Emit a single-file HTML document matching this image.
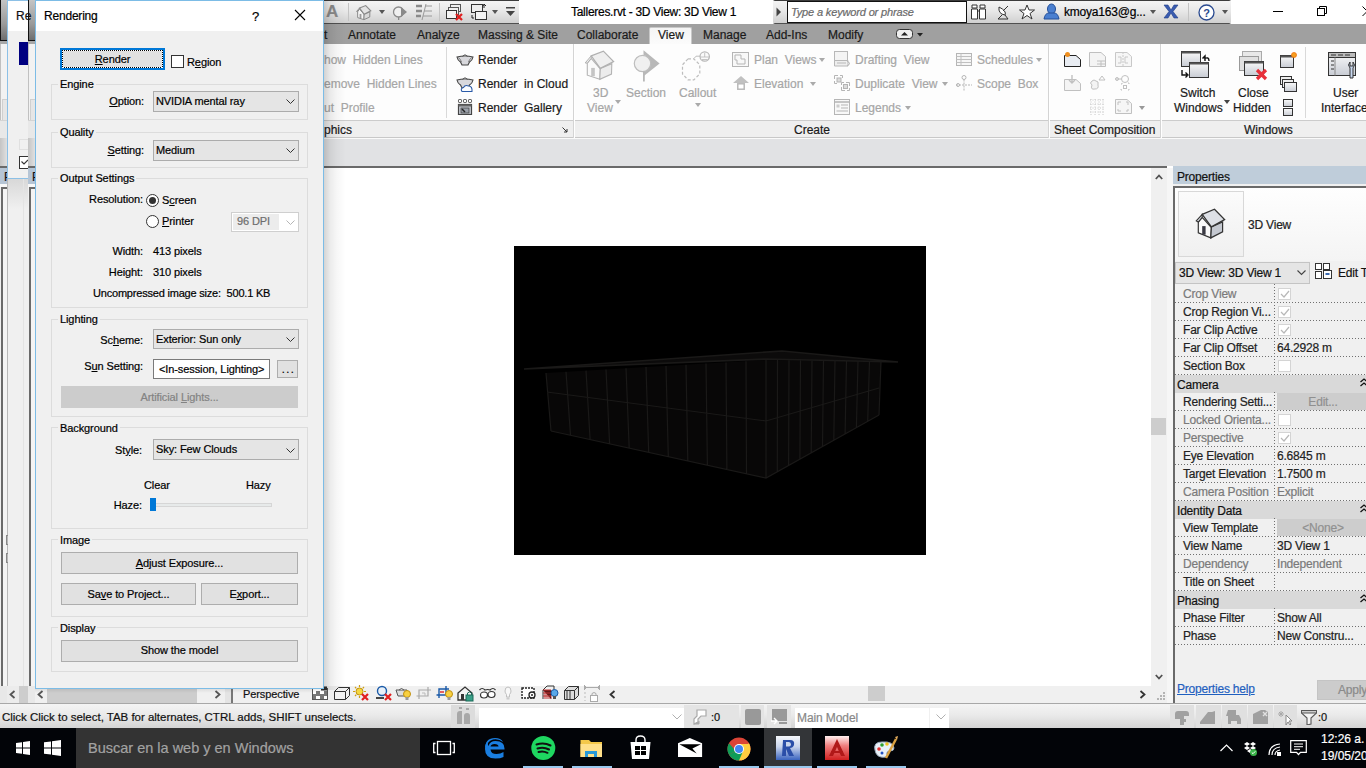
<!DOCTYPE html>
<html><head><meta charset="utf-8">
<style>
*{margin:0;padding:0;box-sizing:border-box}
html,body{width:1366px;height:768px;overflow:hidden;background:#fff;font-family:"Liberation Sans",sans-serif;font-size:12px;color:#000}
.a{position:absolute}
.t{position:absolute;white-space:nowrap;line-height:1}
.d{position:absolute;white-space:nowrap;line-height:1;font-size:11px;letter-spacing:-0.1px;color:#000}
.d.c{text-align:center}
.g{position:absolute;left:51px;width:257px;border:1px solid #dcdcdc}
.gl{left:58px;background:#f0f0f0;padding:0 2px}
.cb{position:absolute;left:153px;width:146px;background:#e5e5e5;border:1px solid #acacac}
.btn{background:#e1e1e1;border:1px solid #adadad}
u{text-decoration:underline;text-underline-offset:1px}
.qat{background:linear-gradient(#3c3c3c 0,#3c3c3c 1px,#f4f4f4 1px,#e8e8e8 11px,#d0d0d0 23px,#505050 23px,#505050 24px)}
.tab{top:29px;font-size:12px;color:#1a1a1a}
.rb{font-size:12px;color:#1a1a1a}
.dis{color:#a6a6a6}
.psep{top:44px;width:2px;height:94px;border-left:1px solid #d4d4d4;border-right:1px solid #fff}
.pr{font-size:12px;letter-spacing:-0.2px}
.dotl{background:repeating-linear-gradient(90deg,#707070 0,#707070 1px,transparent 1px,transparent 3px)}
.dotv{background:repeating-linear-gradient(180deg,#707070 0,#707070 1px,transparent 1px,transparent 3px)}
.d,.pr,.rb,.tab,.t{-webkit-text-stroke:0.2px currentColor}
</style></head><body>
<!-- ===== Revit title bar ===== -->
<div class="a" style="left:0;top:0;width:1366px;height:24px;background:#fff"></div>
<!-- QAT -->
<div class="a qat" style="left:0;top:0;width:519px;height:24px"></div>
<div class="t" style="left:326px;top:3px;font-size:17px;font-weight:bold;color:#8a8a8a">A</div>
<div class="a" style="left:348px;top:3px;width:1px;height:18px;background:#c4c4c4"></div>
<svg class="a" style="left:354px;top:3px" width="20" height="18"><g transform="scale(0.5)"><path d="M7.3 17.2L11.2 12.3L20.3 22.9L19.8 33.3L7.3 29.2Z" fill="#f4f4f4" stroke="#8a8a8a" stroke-width="2"/><path d="M20.3 22.4L31.8 17.7L31.5 28.1L19.8 33.3Z" fill="#d8d8d8" stroke="#8a8a8a" stroke-width="2"/><path d="M11.2 9.9L23.4 5.2L33.6 15.6L20.3 22.4Z" fill="#e4e4e4" stroke="#8a8a8a" stroke-width="2.2"/><path d="M5.2 16.9L11.2 9.9L11.2 12.3L7.3 17.2Z" fill="#e4e4e4" stroke="#8a8a8a" stroke-width="2"/><rect x="11.2" y="21.9" width="3.6" height="8.3" fill="#9a9a9a"/></g></svg>
<svg class="a" style="left:379px;top:10px" width="6" height="4"><path d="M0 0H6L3 4Z" fill="#555"/></svg>
<svg class="a" style="left:392px;top:4px" width="16" height="16"><circle cx="6.5" cy="8" r="5" fill="#f0f0f0" stroke="#8a8a8a" stroke-width="1.3"/><path d="M9 3L15 8L9 13Z" fill="#8a8a8a"/><rect x="6" y="13" width="1.3" height="3" fill="#8a8a8a"/></svg>
<svg class="a" style="left:416px;top:4px" width="17" height="16"><path d="M0 2H6M0 7H6M0 12H5" stroke="#8a8a8a" stroke-width="2.5"/><path d="M9 2H16M8 7H16M7 12H16M10 0L6 16" stroke="#9a9a9a" stroke-width="1"/></svg>
<div class="a" style="left:439px;top:3px;width:1px;height:18px;background:#c4c4c4"></div>
<svg class="a" style="left:446px;top:3px" width="18" height="18"><rect x="4.5" y="1.5" width="10" height="7" fill="#eee" stroke="#555"/><rect x="2.5" y="4.5" width="10" height="7" fill="#eee" stroke="#555"/><rect x="0.5" y="7.5" width="10" height="8" fill="#f4f4f4" stroke="#333"/><path d="M10 11L16 17M16 11L10 17" stroke="#e02020" stroke-width="2.2"/></svg>
<svg class="a" style="left:470px;top:3px" width="18" height="18"><rect x="1.5" y="1.5" width="11" height="8" fill="#eee" stroke="#333"/><rect x="5.5" y="8.5" width="11" height="8" fill="#f4f4f4" stroke="#333"/><path d="M14 5V2M13 3L14 1L16 3" stroke="#222" fill="none"/><path d="M2 12V15H4" stroke="#222" fill="none"/></svg>
<svg class="a" style="left:492px;top:10px" width="6" height="4"><path d="M0 0H6L3 4Z" fill="#555"/></svg>
<svg class="a" style="left:506px;top:7px" width="9" height="9"><rect x="0" y="0" width="9" height="1.5" fill="#444"/><path d="M0 4H9L4.5 9Z" fill="#444"/></svg>

<div class="t" style="left:571px;top:6px;font-size:12px;letter-spacing:-0.28px;color:#000">Talleres.rvt - 3D View: 3D View 1</div>
<svg class="a" style="left:776px;top:7px" width="6" height="10"><path d="M0 0L5 5L0 10Z" fill="#444"/></svg>
<!-- search toolbar -->
<div class="a qat" style="left:773px;top:0;width:458px;height:24px;border-radius:2px"></div>
<svg class="a" style="left:776px;top:7px" width="6" height="10"><path d="M0.5 0.5L5 5L0.5 9.5Z" fill="#444"/></svg>
<div class="a" style="left:787px;top:1px;width:180px;height:22px;background:#fff;border:1px solid #111"></div>
<div class="t" style="left:791px;top:7px;font-size:11px;letter-spacing:-0.15px;color:#6a6a6a;font-style:italic">Type a keyword or phrase</div>
<svg class="a" style="left:970px;top:4px" width="17" height="16"><path d="M2 1H7V4H2ZM10 1H15V4H10Z" fill="#fff" stroke="#333"/><path d="M1.5 5H7.5V15H1.5ZM9.5 5H15.5V15H9.5Z" fill="#fff" stroke="#333"/><path d="M7.5 7H9.5" stroke="#333"/></svg>
<svg class="a" style="left:996px;top:4px" width="14" height="16"><path d="M3 3Q2 10 9 11Q11 7 3 3Z" fill="#fff" stroke="#333"/><path d="M6 11L2 15H12L9 11" fill="none" stroke="#333"/><path d="M7 7L12 2" stroke="#333"/></svg>
<svg class="a" style="left:1019px;top:4px" width="16" height="16"><path d="M8 1L10 6H15.5L11 9.5L13 15L8 11.5L3 15L5 9.5L0.5 6H6Z" fill="#fff" stroke="#333"/></svg>
<svg class="a" style="left:1043px;top:3px" width="17" height="17"><ellipse cx="8.5" cy="6" rx="4" ry="5" fill="#4a7fd0" stroke="#24509a"/><path d="M1 16Q2 10 6 10H11Q15 10 16 16Z" fill="#4a7fd0" stroke="#24509a"/></svg>
<div class="t" style="left:1064px;top:6px;font-size:12px;letter-spacing:-0.2px;color:#000">kmoya163@g...</div>
<svg class="a" style="left:1150px;top:10px" width="6" height="4"><path d="M0 0H6L3 4Z" fill="#555"/></svg>
<svg class="a" style="left:1163px;top:4px" width="16" height="15"><path d="M1 1H5L8 6L11 1H15L10 7.5L15 14H11L8 9L5 14H1L6 7.5Z" fill="#3a5cb0" stroke="#1e3c88" stroke-width="0.6"/></svg>
<div class="a" style="left:1188px;top:3px;width:1px;height:18px;background:#c4c4c4"></div>
<svg class="a" style="left:1198px;top:4px" width="17" height="17"><circle cx="8.5" cy="8.5" r="7.5" fill="#fff" stroke="#2a4a90" stroke-width="1.3"/><text x="8.5" y="13" font-family="Liberation Sans" font-size="11" font-weight="bold" text-anchor="middle" fill="#2a4a90">?</text></svg>
<svg class="a" style="left:1222px;top:10px" width="6" height="4"><path d="M0 0H6L3 4Z" fill="#555"/></svg>
<!-- window controls -->
<div class="a" style="left:1273px;top:11px;width:10px;height:1px;background:#000"></div>
<svg class="a" style="left:1317px;top:6px" width="11" height="10"><rect x="0.5" y="2.5" width="7" height="7" fill="none" stroke="#000"/><path d="M2.5 2.5V0.5H9.5V7.5H7.5" fill="none" stroke="#000"/></svg>
<svg class="a" style="left:1362px;top:6px" width="4" height="11"><path d="M0.5 0.5L10 10M10 0.5L0.5 10" stroke="#000"/></svg>

<!-- ===== Tab bar ===== -->
<div class="a" style="left:0;top:24px;width:1366px;height:20px;background:#a0a0a0"></div>
<div class="a" style="left:649px;top:27px;width:43px;height:18px;background:linear-gradient(#f4f4f4,#fcfcfc);border:1px solid #c8c8c8;border-bottom:none;border-radius:2px 2px 0 0"></div>
<div class="t tab" style="left:324px">t</div>
<div class="t tab" style="left:348px">Annotate</div>
<div class="t tab" style="left:417px">Analyze</div>
<div class="t tab" style="left:478px">Massing &amp; Site</div>
<div class="t tab" style="left:577px">Collaborate</div>
<div class="t tab" style="left:658px">View</div>
<div class="t tab" style="left:703px">Manage</div>
<div class="t tab" style="left:766px">Add-Ins</div>
<div class="t tab" style="left:828px">Modify</div>
<svg class="a" style="left:896px;top:29px" width="28" height="11"><rect x="0.5" y="0.5" width="16" height="9" rx="3" fill="#eee" stroke="#333"/><path d="M5 6.5H12L8.5 3Z" fill="#222"/><path d="M21 4H27L24 7.5Z" fill="#222"/></svg>

<!-- ===== Ribbon ===== -->
<div class="a" style="left:0;top:44px;width:1366px;height:76px;background:#fdfdfd"></div>
<div class="a" style="left:0;top:120px;width:1366px;height:19px;background:#efefef;border-top:1px solid #cccccc;border-bottom:1px solid #fafafa;box-shadow:inset 0 -1px 0 #c8c8c8"></div>
<!-- panel separators -->
<div class="a psep" style="left:573px"></div>
<div class="a psep" style="left:1048px"></div>
<div class="a psep" style="left:1160px"></div>
<div class="a" style="left:446px;top:47px;width:1px;height:71px;background:#d9d9d9"></div>
<div class="a" style="left:1305px;top:47px;width:1px;height:71px;background:#d9d9d9"></div>
<!-- graphics panel -->
<div class="t rb dis" style="left:324px;top:54px">how&nbsp; Hidden Lines</div>
<div class="t rb dis" style="left:324px;top:78px">emove&nbsp; Hidden Lines</div>
<div class="t rb dis" style="left:324px;top:102px">ut&nbsp; Profile</div>
<svg class="a" style="left:456px;top:53px" width="18" height="13"><path d="M1 4Q9 2 17 4Q16.5 7 13.5 9L12 12H6L4.5 9Q1.5 7 1 4Z" fill="#d8d8dc" stroke="#444" stroke-width="1.1"/><path d="M2.5 4.5Q5 7 5.5 9M15.5 4.5Q13 7 12.5 9" fill="none" stroke="#666" stroke-width="0.8"/><path d="M6.5 3.3Q9 0.3 11.5 3.3" fill="#ccc" stroke="#444"/></svg>
<div class="t rb" style="left:478px;top:54px">Render</div>
<svg class="a" style="left:456px;top:76px" width="18" height="17"><path d="M1 4Q9 2 17 4Q16.5 7 13.5 9L12 12H6L4.5 9Q1.5 7 1 4Z" fill="#d8d8dc" stroke="#444" stroke-width="1.1"/><path d="M6.5 3.3Q9 0.3 11.5 3.3" fill="#ccc" stroke="#444"/><path d="M6 15.5Q4 12.5 7.5 11.5Q9 8.5 12.5 10Q16.5 10 16 15.5Z" fill="#fafcff" stroke="#2a5aa8" stroke-width="1.1"/></svg>
<div class="t rb" style="left:478px;top:78px">Render&nbsp; in Cloud</div>
<svg class="a" style="left:457px;top:99px" width="16" height="16"><rect x="1.5" y="0.5" width="3" height="3" rx="0.8" fill="none" stroke="#444"/><rect x="6.5" y="0.5" width="3" height="3" rx="0.8" fill="none" stroke="#444"/><rect x="11.5" y="0.5" width="3" height="3" rx="0.8" fill="none" stroke="#444"/><rect x="1.5" y="5.5" width="13" height="10" fill="#c8ccd4" stroke="#444" stroke-width="1.2"/><rect x="1.5" y="5.5" width="13" height="2" fill="#666"/><rect x="4" y="9" width="8" height="5" fill="#9aa0aa" stroke="#444" stroke-width="0.8"/><path d="M5 10L8 13" stroke="#222" stroke-width="1.5"/></svg>
<div class="t rb" style="left:478px;top:102px">Render&nbsp; Gallery</div>
<div class="t rb" style="left:324px;top:124px;color:#1a1a1a">phics</div>
<svg class="a" style="left:562px;top:127px" width="6" height="6"><path d="M0.5 0.5L5 5M5 2V5H2" fill="none" stroke="#333"/></svg>
<!-- create panel -->
<svg class="a" style="left:580px;top:46px" width="40" height="40"><path d="M7.3 17.2L11.2 12.3L20.3 22.9L19.8 33.3L7.3 29.2Z" fill="#fafafa" stroke="#b4b4b4" stroke-width="1.1"/><path d="M20.3 22.4L31.8 17.7L31.5 28.1L19.8 33.3Z" fill="#ececec" stroke="#b4b4b4" stroke-width="1.1"/><path d="M11.2 9.9L23.4 5.2L33.6 15.6L20.3 22.4Z" fill="#efefef" stroke="#b0b0b0" stroke-width="1.2"/><path d="M5.2 16.9L11.2 9.9L11.2 12.3L7.3 17.2Z" fill="#efefef" stroke="#b0b0b0" stroke-width="1"/><rect x="11.2" y="21.9" width="3.6" height="8.3" fill="#c4c4c4"/></svg>
<div class="t rb dis" style="left:593px;top:87px">3D</div>
<div class="t rb dis" style="left:587px;top:102px">View</div>
<svg class="a" style="left:615px;top:100px" width="6" height="4"><path d="M0 0H6L3 4Z" fill="#aaa"/></svg>
<svg class="a" style="left:628px;top:46px" width="36" height="38"><path d="M15.5 4.3L31.6 17.5L15.5 30.3Z" fill="#b8b8b8"/><circle cx="14.5" cy="17.5" r="8.2" fill="#f0f0f0" stroke="#bdbdbd" stroke-width="1.2"/><rect x="15" y="25.5" width="1.8" height="10" fill="#b8b8b8"/></svg>
<div class="t rb dis" style="left:626px;top:87px">Section</div>
<svg class="a" style="left:680px;top:50px" width="40" height="36"><path d="M6 8.8H11.8L17.8 14.8V23.9L11.8 29.9H6L0.5 23.9V14.8Z" transform="translate(2,0)" fill="none" stroke="#bdbdbd" stroke-width="1.2" stroke-dasharray="3,2"/><path d="M14 8.5L16 6.2H20" fill="none" stroke="#bdbdbd" stroke-width="1"/><circle cx="24.7" cy="6.5" r="4.7" fill="#fafafa" stroke="#b8b8b8" stroke-width="1.2"/><path d="M20 7H29.5M24.7 3V7M22 9.5H27.5" stroke="#b8b8b8" stroke-width="0.8"/></svg>
<div class="t rb dis" style="left:679px;top:87px">Callout</div>
<svg class="a" style="left:695px;top:103px" width="6" height="4"><path d="M0 0H6L3 4Z" fill="#aaa"/></svg>
<svg class="a" style="left:732px;top:52px" width="17" height="15"><rect x="0.5" y="0.5" width="16" height="14" fill="#f8f8f8" stroke="#b5b5b5"/><path d="M3 3H9V7H13V12H5V8H3Z" fill="none" stroke="#b5b5b5"/></svg>
<div class="t rb dis" style="left:754px;top:54px">Plan&nbsp; Views</div>
<svg class="a" style="left:819px;top:58px" width="6" height="4"><path d="M0 0H6L3 4Z" fill="#aaa"/></svg>
<svg class="a" style="left:733px;top:76px" width="16" height="14"><path d="M8 0L16 7H12V14H4V7H0Z" fill="#c0c0c0"/><rect x="5" y="8" width="6" height="5" fill="#fff" stroke="#b5b5b5"/></svg>
<div class="t rb dis" style="left:754px;top:78px">Elevation</div>
<svg class="a" style="left:810px;top:82px" width="6" height="4"><path d="M0 0H6L3 4Z" fill="#aaa"/></svg>
<svg class="a" style="left:834px;top:51px" width="17" height="16"><rect x="0.5" y="0.5" width="13" height="9" fill="#f4f4f4" stroke="#b8b8b8"/><path d="M0.5 9.5H14V15H0.5ZM3 12H12" fill="#eee" stroke="#b8b8b8"/><path d="M13 10L16 12.5L13 15" fill="none" stroke="#b8b8b8"/></svg>
<div class="t rb dis" style="left:855px;top:54px">Drafting&nbsp; View</div>
<svg class="a" style="left:834px;top:75px" width="16" height="16"><path d="M0.5 4V0.5H4M6 0.5H8.5V3M0.5 6V8.5H3" fill="none" stroke="#b5b5b5"/><path d="M7.5 12V15.5H11M13 15.5H15.5V13M15.5 11V7.5H12M10 7.5H7.5V10" fill="none" stroke="#b5b5b5"/><rect x="3" y="3" width="4" height="4" fill="#ddd" stroke="#b5b5b5"/><rect x="9.5" y="9.5" width="4" height="4" fill="#ddd" stroke="#b5b5b5"/></svg>
<div class="t rb dis" style="left:855px;top:78px">Duplicate&nbsp; View</div>
<svg class="a" style="left:942px;top:82px" width="6" height="4"><path d="M0 0H6L3 4Z" fill="#aaa"/></svg>
<svg class="a" style="left:834px;top:99px" width="16" height="16"><rect x="0.5" y="0.5" width="15" height="15" fill="#f8f8f8" stroke="#b5b5b5"/><path d="M0.5 3H15.5" stroke="#b5b5b5" stroke-width="1.5"/><rect x="2.5" y="5.5" width="3" height="3" fill="#ccc"/><path d="M7 6H14M7 9H14M2.5 12H14" stroke="#b5b5b5"/></svg>
<div class="t rb dis" style="left:855px;top:102px">Legends</div>
<svg class="a" style="left:905px;top:106px" width="6" height="4"><path d="M0 0H6L3 4Z" fill="#aaa"/></svg>
<svg class="a" style="left:956px;top:53px" width="16" height="13"><rect x="0.5" y="0.5" width="15" height="12" fill="#f6f6f6" stroke="#b5b5b5"/><path d="M0.5 3.5H15.5M0.5 6.5H15.5M0.5 9.5H15.5M5 0.5V12.5" stroke="#c0c0c0"/></svg>
<div class="t rb dis" style="left:977px;top:54px">Schedules</div>
<svg class="a" style="left:1036px;top:58px" width="6" height="4"><path d="M0 0H6L3 4Z" fill="#aaa"/></svg>
<svg class="a" style="left:956px;top:75px" width="16" height="16"><circle cx="8" cy="2.5" r="2" fill="none" stroke="#b5b5b5"/><path d="M8 4.5V16M0 10H16" stroke="#b5b5b5" stroke-dasharray="2,1"/><circle cx="2" cy="10" r="1.5" fill="none" stroke="#b5b5b5"/></svg>
<div class="t rb dis" style="left:977px;top:78px">Scope&nbsp; Box</div>
<div class="t rb" style="left:794px;top:124px;color:#1a1a1a">Create</div>
<!-- sheet composition -->
<svg class="a" style="left:1064px;top:51px" width="18" height="16"><path d="M0.5 4.5H12L16.5 8.5V15.5H0.5Z" fill="#e8ecf2" stroke="#222"/><circle cx="3.5" cy="3.5" r="2.5" fill="#f09020"/></svg>
<svg class="a" style="left:1089px;top:52px" width="17" height="15"><path d="M0.5 0.5H12L16.5 4.5V14.5H0.5Z" fill="#f4f4f4" stroke="#c0c0c0"/><path d="M8 9H16M8 12H16M12 9V14.5" stroke="#c0c0c0"/></svg>
<svg class="a" style="left:1115px;top:52px" width="17" height="15"><path d="M0.5 0.5H12L16.5 4.5V14.5H0.5Z" fill="#f6f6f6" stroke="#c8c8c8"/><path d="M8 0V15" stroke="#c8c8c8" stroke-dasharray="2,1"/><path d="M3 5H6V11H3M13 5H10V11H13" fill="none" stroke="#c8c8c8"/></svg>
<svg class="a" style="left:1064px;top:75px" width="17" height="16"><path d="M0.5 4.5H12L16.5 8.5V15.5H0.5Z" fill="#f4f4f4" stroke="#c0c0c0"/><path d="M8 0V7M5 5L8 8L11 5" fill="none" stroke="#c0c0c0" stroke-width="1.4"/></svg>
<svg class="a" style="left:1089px;top:75px" width="17" height="16"><path d="M3 10Q0 8 3 6Q5 4 7 6Q10 6 9 10Q10 14 6 14Q1 15 3 10Z" fill="#f4f4f4" stroke="#c0c0c0"/><path d="M10 5L13 1L16 5Z" fill="none" stroke="#c0c0c0"/></svg>
<svg class="a" style="left:1115px;top:75px" width="17" height="16"><circle cx="10" cy="4" r="3.5" fill="none" stroke="#c0c0c0"/><path d="M0.5 4H6.5" stroke="#c0c0c0"/><circle cx="2" cy="4" r="1.5" fill="none" stroke="#c0c0c0"/><path d="M6 9H7V8M13 8H14V9M14 14V15H13M7 15H6V14" fill="none" stroke="#c0c0c0"/><rect x="8.5" y="10.5" width="3" height="3" fill="none" stroke="#c0c0c0"/></svg>
<svg class="a" style="left:1089px;top:99px" width="17" height="16"><path d="M1 1H16M1 5H16M1 9H16M1 13H16M2 0V16M6 0V16M10 0V16M14 0V16" stroke="#c8c8c8" stroke-dasharray="1,1.5"/></svg>
<svg class="a" style="left:1115px;top:99px" width="17" height="15"><path d="M0.5 0.5H12L16.5 4.5V14.5H0.5Z" fill="#f6f6f6" stroke="#c0c0c0"/><path d="M3 6V3H6M11 3H13V6M13 10V12H11M6 12H3V10" fill="none" stroke="#c0c0c0"/></svg>
<svg class="a" style="left:1139px;top:106px" width="6" height="4"><path d="M0 0H6L3 4Z" fill="#999"/></svg>
<div class="t rb" style="left:1054px;top:124px;color:#1a1a1a">Sheet Composition</div>
<!-- windows panel -->
<svg class="a" style="left:1180px;top:50px" width="32" height="30"><rect x="1.5" y="1.5" width="19" height="15" fill="url(#wg)" stroke="#333"/><rect x="1.5" y="1.5" width="19" height="2" fill="#555"/><rect x="9.5" y="12.5" width="19" height="15" fill="url(#wg)" stroke="#333"/><rect x="9.5" y="12.5" width="19" height="2" fill="#555"/><path d="M24 9Q29 6 29 11M22.5 8.5L25 6V11" fill="none" stroke="#111" stroke-width="1.4"/><path d="M2 20V25H7M5.5 22.5L8 25L5.5 27.5" fill="none" stroke="#111" stroke-width="1.4"/></svg>
<div class="t rb" style="left:1180px;top:87px;color:#1a1a1a">Switch</div>
<div class="t rb" style="left:1174px;top:102px;color:#1a1a1a">Windows</div>
<svg class="a" style="left:1224px;top:100px" width="6" height="4"><path d="M0 0H6L3 4Z" fill="#444"/></svg>
<svg class="a" style="left:1238px;top:50px" width="32" height="31"><rect x="4.5" y="1.5" width="19" height="14" fill="#e8e8e8" stroke="#aaa"/><rect x="1.5" y="6.5" width="19" height="14" fill="#e0e0e0" stroke="#999"/><rect x="6.5" y="11.5" width="19" height="14" fill="url(#wg)" stroke="#333"/><rect x="6.5" y="11.5" width="19" height="2" fill="#555"/><path d="M19 20L28 29M28 20L19 29" stroke="#e8303a" stroke-width="3.2"/></svg>
<div class="t rb" style="left:1238px;top:87px;color:#1a1a1a">Close</div>
<div class="t rb" style="left:1233px;top:102px;color:#1a1a1a">Hidden</div>
<svg class="a" style="left:1280px;top:52px" width="17" height="16"><rect x="0.5" y="3.5" width="13" height="12" fill="url(#wg)" stroke="#333"/><rect x="0.5" y="3.5" width="13" height="2" fill="#555"/><circle cx="14" cy="3" r="2.5" fill="#f5a020" stroke="#f07010" stroke-width="0.8"/></svg>
<svg class="a" style="left:1280px;top:76px" width="17" height="16"><rect x="0.5" y="0.5" width="11" height="8" fill="#eee" stroke="#333"/><rect x="2.5" y="3.5" width="11" height="8" fill="#eee" stroke="#333"/><rect x="4.5" y="6.5" width="12" height="9" fill="url(#wg)" stroke="#333"/></svg>
<svg class="a" style="left:1283px;top:99px" width="10" height="17"><rect x="0.5" y="0.5" width="9" height="7" fill="url(#wg)" stroke="#333"/><rect x="0.5" y="9.5" width="9" height="7" fill="url(#wg)" stroke="#333"/></svg>
<svg class="a" style="left:1327px;top:51px" width="32" height="30"><rect x="1.5" y="1.5" width="27" height="23" fill="url(#wg)" stroke="#333"/><rect x="1.5" y="1.5" width="27" height="5" fill="#bbb" stroke="#333"/><path d="M4 4H9M11 4H16M18 4H23M4 10H7M4 14H7M4 18H7" stroke="#333"/><path d="M8 6.5V24.5" stroke="#888"/><path d="M23 17Q20 14 23 11V15H26V11Q29 14 26 17V27H23Z" fill="#c8d8f0" stroke="#333"/></svg>
<div class="t rb" style="left:1333px;top:87px;color:#1a1a1a">User</div>
<div class="t rb" style="left:1321px;top:102px;color:#1a1a1a">Interface</div>
<div class="t rb" style="left:1244px;top:124px;color:#1a1a1a">Windows</div>
<svg width="0" height="0" style="position:absolute"><defs><linearGradient id="wg" x1="0" y1="0" x2="0" y2="1"><stop offset="0" stop-color="#fafafa"/><stop offset="1" stop-color="#c8ccd4"/></linearGradient></defs></svg>

<!-- gray bar under ribbon -->
<div class="a" style="left:0;top:139px;width:1366px;height:27px;background:#e1e2e4"></div>
<div class="a" style="left:0;top:166px;width:1167px;height:2px;background:#6a6a6a"></div>

<!-- view area -->
<div class="a" style="left:0;top:168px;width:1151px;height:518px;background:#fff"></div>
<div class="a" style="left:1151px;top:168px;width:16px;height:518px;background:#f0f0f0"></div>
<svg class="a" style="left:1155px;top:174px" width="8" height="6"><path d="M0.8 5L4 1.5L7.2 5" fill="none" stroke="#505050" stroke-width="1.8"/></svg>
<svg class="a" style="left:1155px;top:674px" width="8" height="6"><path d="M0.8 1L4 4.5L7.2 1" fill="none" stroke="#505050" stroke-width="1.8"/></svg>
<div class="a" style="left:1151px;top:418px;width:15px;height:17px;background:#cdcdcd"></div>
<!-- render image -->
<div class="a" style="left:514px;top:246px;width:412px;height:309px;background:#000"></div>
<svg class="a" style="left:514px;top:246px" width="412" height="309">
<path d="M32 127 L252 114 L252 232 L37 185 Z" fill="#080707"/>
<path d="M252 114 L367 115 L365 169 L252 232 Z" fill="#090808"/>
<path d="M10 123 L268 105 L384 116 L252 113 Z" fill="#0c0b0b" stroke="#1a1918" stroke-width="1.6"/>
<path d="M32.0 127.0L37.0 185.0 M52.0 125.8L56.5 189.3 M72.0 124.6L76.1 193.5 M92.0 123.5L95.6 197.8 M112.0 122.3L115.2 202.1 M132.0 121.1L134.7 206.4 M152.0 119.9L154.3 210.6 M172.0 118.7L173.8 214.9 M192.0 117.5L193.4 219.2 M212.0 116.4L212.9 223.5 M232.0 115.2L232.5 227.7 M252.0 114.0L252.0 232.0 M263.5 114.1L263.3 225.7 M275.0 114.2L274.6 219.4 M286.5 114.3L285.9 213.1 M298.0 114.4L297.2 206.8 M309.5 114.5L308.5 200.5 M321.0 114.6L319.8 194.2 M332.5 114.7L331.1 187.9 M344.0 114.8L342.4 181.6 M355.5 114.9L353.7 175.3 M367.0 115.0L365.0 169.0 M37 185L252 232L365 169 M33 146L252 175L365 142" fill="none" stroke="#1a1918" stroke-width="1.2"/>
</svg>

<!-- right gap -->
<div class="a" style="left:1167px;top:168px;width:6px;height:535px;background:#f6f6f6"></div>
<!-- properties -->
<div class="a" style="left:1173px;top:166px;width:193px;height:538px;background:#f0f0f0"></div>
<div class="a" style="left:1173px;top:166px;width:193px;height:18px;background:#bfcdda"></div>
<div class="t pr" style="left:1177px;top:171px;color:#111">Properties</div>
<div class="a" style="left:1173px;top:186px;width:193px;height:2px;background:#6a6a6a"></div>
<div class="a" style="left:1173px;top:186px;width:2px;height:517px;background:#6a6a6a"></div>
<div class="a" style="left:1175px;top:188px;width:191px;height:73px;background:linear-gradient(#fefefe,#f4f4f4)"></div>
<div class="a" style="left:1178px;top:191px;width:66px;height:66px;background:linear-gradient(#fbfbfb,#f0f0f0);border:1px solid #d8d8d8"></div>
<svg class="a" style="left:1190px;top:204px" width="40" height="40"><path d="M8.3 18L12.2 13.3L21.4 23.5L20.8 33.9L8.3 28.9Z" fill="#fafafa" stroke="#333" stroke-width="1.2"/><path d="M21.4 22.9L32.6 18L32.6 27.9L20.8 33.9Z" fill="#c4c8d0" stroke="#333" stroke-width="1.2"/><path d="M12.2 10.4L24.5 5.2L34.6 15.6L21.4 22.9Z" fill="#dde0e6" stroke="#333" stroke-width="1.3"/><path d="M6.25 16.9L12.2 10.4L12.2 13.3L8.3 18Z" fill="#dde0e6" stroke="#333" stroke-width="1.1"/><rect x="12.2" y="22.1" width="3.4" height="8.6" fill="#3a3a44"/></svg>
<div class="t pr" style="left:1248px;top:219px;color:#222">3D View</div>
<div class="a" style="left:1175px;top:262px;width:135px;height:22px;background:#e5e5e5;border:1px solid #c4c4c4"></div>
<div class="t pr" style="left:1179px;top:267px;color:#111">3D View: 3D View 1</div>
<svg class="a" style="left:1297px;top:270px" width="9" height="6"><path d="M0.5 0.5L4.5 4.5L8.5 0.5" fill="none" stroke="#444" stroke-width="1.1"/></svg>
<svg class="a" style="left:1315px;top:263px" width="17" height="16"><rect x="0.5" y="0.5" width="6" height="6" fill="#fff" stroke="#333"/><rect x="0.5" y="8.5" width="6" height="7" fill="#fff" stroke="#333"/><rect x="8.5" y="0.5" width="6" height="6" fill="#fff" stroke="#333"/><rect x="8.5" y="7.5" width="8" height="8" fill="#fff" stroke="#333"/><rect x="10.5" y="10" width="4" height="2" fill="#3a6ab0"/></svg>
<div class="t pr" style="left:1338px;top:267px;color:#111">Edit Type</div>
<!-- property rows -->
<div class="t pr" style="left:1183px;top:288px;color:#7a7a7a">Crop View</div>
<div class="a" style="left:1278px;top:288px;width:13px;height:12px;background:#fff;border:1px solid #d4d4d4"></div>
<svg class="a" style="left:1280px;top:290px" width="10" height="8"><path d="M1 4L4 7L9 1" fill="none" stroke="#b8b8b8" stroke-width="1.2"/></svg>
<div class="a dotl" style="left:1175px;top:302px;width:191px;height:1px"></div>
<div class="a dotv" style="left:1274px;top:284px;width:1px;height:18px"></div>
<div class="t pr" style="left:1183px;top:306px;color:#222">Crop Region Vi...</div>
<div class="a" style="left:1278px;top:306px;width:13px;height:12px;background:#fff;border:1px solid #d4d4d4"></div>
<svg class="a" style="left:1280px;top:308px" width="10" height="8"><path d="M1 4L4 7L9 1" fill="none" stroke="#b8b8b8" stroke-width="1.2"/></svg>
<div class="a dotl" style="left:1175px;top:320px;width:191px;height:1px"></div>
<div class="a dotv" style="left:1274px;top:302px;width:1px;height:18px"></div>
<div class="t pr" style="left:1183px;top:324px;color:#222">Far Clip Active</div>
<div class="a" style="left:1278px;top:324px;width:13px;height:12px;background:#fff;border:1px solid #d4d4d4"></div>
<svg class="a" style="left:1280px;top:326px" width="10" height="8"><path d="M1 4L4 7L9 1" fill="none" stroke="#b8b8b8" stroke-width="1.2"/></svg>
<div class="a dotl" style="left:1175px;top:338px;width:191px;height:1px"></div>
<div class="a dotv" style="left:1274px;top:320px;width:1px;height:18px"></div>
<div class="t pr" style="left:1183px;top:342px;color:#222">Far Clip Offset</div>
<div class="t pr" style="left:1277px;top:342px;color:#222">64.2928 m</div>
<div class="a dotl" style="left:1175px;top:356px;width:191px;height:1px"></div>
<div class="a dotv" style="left:1274px;top:338px;width:1px;height:18px"></div>
<div class="t pr" style="left:1183px;top:360px;color:#222">Section Box</div>
<div class="a" style="left:1278px;top:360px;width:13px;height:12px;background:#fff;border:1px solid #d4d4d4"></div>
<div class="a dotl" style="left:1175px;top:374px;width:191px;height:1px"></div>
<div class="a dotv" style="left:1274px;top:356px;width:1px;height:18px"></div>
<div class="a" style="left:1175px;top:375px;width:191px;height:18px;background:#d9d9d9"></div>
<div class="t pr" style="left:1177px;top:379px;color:#111">Camera</div>
<svg class="a" style="left:1360px;top:378px" width="8" height="9"><path d="M0.5 4L4 1L7.5 4M0.5 8L4 5L7.5 8" fill="none" stroke="#111" stroke-width="1.3"/></svg>
<div class="t pr" style="left:1183px;top:396px;color:#222">Rendering Setti...</div>
<div class="a" style="left:1277px;top:393px;width:89px;height:17px;background:#cdcdcd"></div>
<div class="t pr" style="left:1277px;width:92px;text-align:center;top:396px;color:#909090">Edit...</div>
<div class="a dotl" style="left:1175px;top:410px;width:191px;height:1px"></div>
<div class="a dotv" style="left:1274px;top:392px;width:1px;height:18px"></div>
<div class="t pr" style="left:1183px;top:414px;color:#7a7a7a">Locked Orienta...</div>
<div class="a" style="left:1278px;top:414px;width:13px;height:12px;background:#fff;border:1px solid #d4d4d4"></div>
<div class="a dotl" style="left:1175px;top:428px;width:191px;height:1px"></div>
<div class="a dotv" style="left:1274px;top:410px;width:1px;height:18px"></div>
<div class="t pr" style="left:1183px;top:432px;color:#7a7a7a">Perspective</div>
<div class="a" style="left:1278px;top:432px;width:13px;height:12px;background:#fff;border:1px solid #d4d4d4"></div>
<svg class="a" style="left:1280px;top:434px" width="10" height="8"><path d="M1 4L4 7L9 1" fill="none" stroke="#b8b8b8" stroke-width="1.2"/></svg>
<div class="a dotl" style="left:1175px;top:446px;width:191px;height:1px"></div>
<div class="a dotv" style="left:1274px;top:428px;width:1px;height:18px"></div>
<div class="t pr" style="left:1183px;top:450px;color:#222">Eye Elevation</div>
<div class="t pr" style="left:1277px;top:450px;color:#222">6.6845 m</div>
<div class="a dotl" style="left:1175px;top:464px;width:191px;height:1px"></div>
<div class="a dotv" style="left:1274px;top:446px;width:1px;height:18px"></div>
<div class="t pr" style="left:1183px;top:468px;color:#222">Target Elevation</div>
<div class="t pr" style="left:1277px;top:468px;color:#222">1.7500 m</div>
<div class="a dotl" style="left:1175px;top:482px;width:191px;height:1px"></div>
<div class="a dotv" style="left:1274px;top:464px;width:1px;height:18px"></div>
<div class="t pr" style="left:1183px;top:486px;color:#7a7a7a">Camera Position</div>
<div class="t pr" style="left:1277px;top:486px;color:#7a7a7a">Explicit</div>
<div class="a dotl" style="left:1175px;top:500px;width:191px;height:1px"></div>
<div class="a dotv" style="left:1274px;top:482px;width:1px;height:18px"></div>
<div class="a" style="left:1175px;top:501px;width:191px;height:18px;background:#d9d9d9"></div>
<div class="t pr" style="left:1177px;top:505px;color:#111">Identity Data</div>
<svg class="a" style="left:1360px;top:504px" width="8" height="9"><path d="M0.5 4L4 1L7.5 4M0.5 8L4 5L7.5 8" fill="none" stroke="#111" stroke-width="1.3"/></svg>
<div class="t pr" style="left:1183px;top:522px;color:#222">View Template</div>
<div class="a" style="left:1277px;top:519px;width:89px;height:17px;background:#cdcdcd"></div>
<div class="t pr" style="left:1277px;width:92px;text-align:center;top:522px;color:#909090">&lt;None&gt;</div>
<div class="a dotl" style="left:1175px;top:536px;width:191px;height:1px"></div>
<div class="a dotv" style="left:1274px;top:518px;width:1px;height:18px"></div>
<div class="t pr" style="left:1183px;top:540px;color:#222">View Name</div>
<div class="t pr" style="left:1277px;top:540px;color:#222">3D View 1</div>
<div class="a dotl" style="left:1175px;top:554px;width:191px;height:1px"></div>
<div class="a dotv" style="left:1274px;top:536px;width:1px;height:18px"></div>
<div class="t pr" style="left:1183px;top:558px;color:#7a7a7a">Dependency</div>
<div class="t pr" style="left:1277px;top:558px;color:#7a7a7a">Independent</div>
<div class="a dotl" style="left:1175px;top:572px;width:191px;height:1px"></div>
<div class="a dotv" style="left:1274px;top:554px;width:1px;height:18px"></div>
<div class="t pr" style="left:1183px;top:576px;color:#222">Title on Sheet</div>
<div class="a dotl" style="left:1175px;top:590px;width:191px;height:1px"></div>
<div class="a dotv" style="left:1274px;top:572px;width:1px;height:18px"></div>
<div class="a" style="left:1175px;top:591px;width:191px;height:18px;background:#d9d9d9"></div>
<div class="t pr" style="left:1177px;top:595px;color:#111">Phasing</div>
<svg class="a" style="left:1360px;top:594px" width="8" height="9"><path d="M0.5 4L4 1L7.5 4M0.5 8L4 5L7.5 8" fill="none" stroke="#111" stroke-width="1.3"/></svg>
<div class="t pr" style="left:1183px;top:612px;color:#222">Phase Filter</div>
<div class="t pr" style="left:1277px;top:612px;color:#222">Show All</div>
<div class="a dotl" style="left:1175px;top:626px;width:191px;height:1px"></div>
<div class="a dotv" style="left:1274px;top:608px;width:1px;height:18px"></div>
<div class="t pr" style="left:1183px;top:630px;color:#222">Phase</div>
<div class="t pr" style="left:1277px;top:630px;color:#222">New Constru...</div>
<div class="a dotl" style="left:1175px;top:644px;width:191px;height:1px"></div>
<div class="a dotv" style="left:1274px;top:626px;width:1px;height:18px"></div>
<div class="t pr" style="left:1177px;top:683px;color:#1f5fbf;text-decoration:underline">Properties help</div>
<div class="a" style="left:1317px;top:680px;width:60px;height:20px;background:#cccccc;border:1px solid #c4c4c4"></div>
<div class="t pr" style="left:1338px;top:684px;color:#8a8a8a">Apply</div>

<!-- view control bar -->
<div class="a" style="left:0;top:686px;width:1151px;height:18px;background:#f0f0f0"></div>
<div class="a" style="left:47px;top:689px;width:150px;height:15px;background:#cdcdcd"></div>
<svg class="a" style="left:9px;top:690px" width="7" height="9"><path d="M5.5 1L1.5 4.5L5.5 8" fill="none" stroke="#555" stroke-width="1.8"/></svg>
<svg class="a" style="left:37px;top:690px" width="7" height="9"><path d="M5.5 1L1.5 4.5L5.5 8" fill="none" stroke="#555" stroke-width="1.8"/></svg>
<svg class="a" style="left:214px;top:690px" width="7" height="9"><path d="M1.5 1L5.5 4.5L1.5 8" fill="none" stroke="#555" stroke-width="1.8"/></svg>
<div class="a" style="left:225px;top:686px;width:7px;height:18px;background:#e4e4e4"></div>
<div class="a" style="left:231px;top:689px;width:2px;height:14px;background:#777"></div>
<div class="t" style="left:243px;top:689px;font-size:11px;letter-spacing:-0.1px;color:#111">Perspective</div>
<svg class="a" style="left:312px;top:686px" width="16" height="14"><rect x="0.5" y="2.5" width="15" height="11" fill="#fff" stroke="#555"/><path d="M1 8H4V5H8V8H12V5H15V10H12V13H8V10H4V13H1Z" fill="#777"/><rect x="9" y="0.5" width="6" height="4" fill="#333"/></svg>
<svg class="a" style="left:334px;top:686px" width="16" height="14"><path d="M0.5 5.5L4.5 1.5H15.5V9.5L11.5 13.5H0.5Z" fill="#f4f4f4" stroke="#333"/><path d="M0.5 5.5H11.5V13.5M11.5 5.5L15.5 1.5" fill="none" stroke="#333"/></svg>
<svg class="a" style="left:353px;top:685px" width="16" height="16"><circle cx="6.5" cy="6.5" r="3.5" fill="#f5d840" stroke="#c09010"/><path d="M6.5 0V2M6.5 11V13M0 6.5H2M11 6.5H13M2 2L3.3 3.3M11 2L9.7 3.3M2 11L3.3 9.7" stroke="#d0a010" stroke-width="1.2"/><path d="M9 9L15 15M15 9L9 15" stroke="#e02020" stroke-width="2.2"/></svg>
<svg class="a" style="left:376px;top:685px" width="16" height="16"><circle cx="6" cy="6" r="4.5" fill="#e8f0f8" stroke="#1a5aa8" stroke-width="1.4"/><path d="M0 13H8" stroke="#444" stroke-width="2"/><path d="M9 9L15 15M15 9L9 15" stroke="#e02020" stroke-width="2.2"/></svg>
<svg class="a" style="left:395px;top:685px" width="16" height="16"><path d="M1 5H12L10 11H3Z" fill="#ddd" stroke="#555"/><path d="M4 5Q6.5 2 9 5" fill="#ccc" stroke="#555"/><circle cx="12" cy="9" r="3.5" fill="#f8d040" stroke="#c09010"/><rect x="10.5" y="12" width="3" height="3" fill="#999"/></svg>
<svg class="a" style="left:416px;top:686px" width="16" height="14"><path d="M3 13V4H15M0.5 10H12V1" fill="none" stroke="#aaa" stroke-width="1.2"/><path d="M6 7H9V10" fill="none" stroke="#bbb"/></svg>
<svg class="a" style="left:436px;top:685px" width="17" height="16"><path d="M3 13V4H13M0.5 10H10V1" fill="none" stroke="#1a5aa8" stroke-width="1.4"/><path d="M4 7H8" stroke="#e03030" stroke-width="1.5"/><circle cx="13" cy="9" r="3.5" fill="#f8d040" stroke="#c09010"/><rect x="11.5" y="12" width="3" height="3" fill="#999"/></svg>
<svg class="a" style="left:457px;top:685px" width="17" height="17"><path d="M1 8L8 2L15 8V15H1Z" fill="#f4f4f4" stroke="#333" stroke-width="1.3"/><rect x="4" y="9" width="3" height="6" fill="#333"/><rect x="9" y="10" width="7" height="6" fill="#3aa088" stroke="#1a6a58"/><path d="M10.5 10V8Q12.5 6 14.5 8V10" fill="none" stroke="#1a6a58"/></svg>
<svg class="a" style="left:479px;top:686px" width="17" height="14"><path d="M0.5 4Q3 1 6 4Q9 3 11 4Q14 1 16.5 4" fill="none" stroke="#333" stroke-width="1.2"/><ellipse cx="5" cy="9" rx="3.5" ry="3" fill="#fff" stroke="#333" stroke-width="1.2"/><ellipse cx="12.5" cy="8.5" rx="3.5" ry="3" fill="#fff" stroke="#333" stroke-width="1.2"/></svg>
<svg class="a" style="left:504px;top:686px" width="8" height="14"><path d="M4 1Q7 1 7 5Q7 7 5.5 8.5V11H2.5V8.5Q1 7 1 5Q1 1 4 1Z" fill="#f8f8f8" stroke="#c0c0c0"/><rect x="2.5" y="11.5" width="3" height="2" fill="#ccc"/></svg>
<svg class="a" style="left:521px;top:686px" width="16" height="14"><rect x="1" y="2" width="12" height="10" fill="#fff" stroke="#222" stroke-width="1.4" stroke-dasharray="2,1"/><circle cx="11" cy="9" r="3" fill="#fff" stroke="#222" stroke-width="1.3"/><circle cx="11" cy="9" r="1" fill="#222"/></svg>
<svg class="a" style="left:542px;top:685px" width="17" height="16"><path d="M1 14V5L5 1H12V10" fill="none" stroke="#333"/><path d="M1 5H9V14M3 5V14M5 5V14M7 5V14M1 8H9M1 11H9" stroke="#c03030" stroke-width="1"/><circle cx="12.5" cy="8" r="3.5" fill="#5aa8e8" stroke="#1a5aa8"/><rect x="11" y="11" width="3" height="3" fill="#555"/></svg>
<svg class="a" style="left:564px;top:686px" width="15" height="14"><path d="M0.5 4.5L4.5 0.5H14.5V9.5L10.5 13.5H0.5Z" fill="#ddd" stroke="#333"/><path d="M0.5 4.5H10.5V13.5M10.5 4.5L14.5 0.5M3 4.5V13.5M6 4.5V13.5" fill="none" stroke="#333"/></svg>
<svg class="a" style="left:584px;top:685px" width="16" height="17"><path d="M0.5 0V5M15.5 0V5M0.5 2.5H15.5M2 1L0.5 2.5L2 4M14 1L15.5 2.5L14 4" fill="none" stroke="#aaa"/><path d="M1 7V16" stroke="#bbb" stroke-dasharray="2,2"/><rect x="6.5" y="10.5" width="7" height="6" fill="#fff" stroke="#aaa"/><path d="M8 10.5V8.5Q10 6.5 12 8.5V10.5" fill="none" stroke="#aaa"/></svg>

<div class="a" style="left:603px;top:686px;width:564px;height:18px;background:#f0f0f0"></div>
<svg class="a" style="left:609px;top:690px" width="7" height="9"><path d="M5.5 1L1.5 4.5L5.5 8" fill="none" stroke="#333" stroke-width="1.8"/></svg>
<div class="a" style="left:868px;top:686px;width:17px;height:15px;background:#cdcdcd"></div>
<svg class="a" style="left:1139px;top:690px" width="7" height="9"><path d="M1.5 1L5.5 4.5L1.5 8" fill="none" stroke="#333" stroke-width="1.8"/></svg>
<svg class="a" style="left:1156px;top:692px" width="10" height="10"><path d="M7 0h2v2h-2zM4 3h2v2h-2zM7 3h2v2h-2zM1 6h2v2h-2zM4 6h2v2h-2zM7 6h2v2h-2z" fill="#b4b4b4"/></svg>

<!-- status bar -->
<div class="a" style="left:0;top:703px;width:1366px;height:25px;background:linear-gradient(#a8a8a8 0,#a8a8a8 1px,#f4f4f4 1px,#eaeaea 12px,#d4d4d4 25px)"></div>
<div class="t" style="left:2px;top:712px;font-size:11.5px;letter-spacing:-0.02px;color:#111">Click Click to select, TAB for alternates, CTRL adds, SHIFT unselects.</div>
<div class="a" style="left:451px;top:705px;width:24px;height:23px;background:#dcdcdc"></div>
<svg class="a" style="left:454px;top:707px" width="18" height="18"><path d="M3 17V7Q3 4 6 4H8V17ZM10 17V9Q10 6 13 6Q16 6 16 9V17Z" fill="#a8a8a8"/><path d="M5 1H8M12 2H15" stroke="#a8a8a8" stroke-width="2"/></svg>
<div class="a" style="left:479px;top:708px;width:205px;height:20px;background:#fff"></div>
<svg class="a" style="left:672px;top:714px" width="10" height="6"><path d="M0.5 0.5L5 5L9.5 0.5" fill="none" stroke="#b0b0b0"/></svg>
<div class="a" style="left:684px;top:705px;width:55px;height:23px;background:#e4e4e4"></div>
<svg class="a" style="left:691px;top:708px" width="16" height="17"><path d="M6 2H15V8H10L7 11V14L3 16V11L6 8Z" fill="#fff" stroke="#aaa" stroke-width="1.2"/><path d="M3 16H8V13" fill="#a8a8a8" stroke="#a8a8a8"/></svg>
<div class="t" style="left:711px;top:712px;font-size:11px;color:#111">:0</div>
<div class="a" style="left:741px;top:705px;width:23px;height:23px;background:#e4e4e4"></div>
<div class="a" style="left:745px;top:709px;width:16px;height:16px;background:#999;border-radius:2px"></div>
<div class="a" style="left:767px;top:705px;width:24px;height:23px;background:#e4e4e4"></div>
<svg class="a" style="left:771px;top:708px" width="17" height="17"><rect x="1" y="1" width="15" height="12" fill="#999"/><path d="M0 13H6M3 10L6 13L3 16" fill="none" stroke="#fff" stroke-width="1.4"/><path d="M8 15H16" stroke="#999" stroke-width="2"/></svg>
<div class="a" style="left:795px;top:708px;width:154px;height:20px;background:#fff"></div>
<div class="a" style="left:929px;top:708px;width:1px;height:20px;background:#f0f0f0"></div>
<div class="t" style="left:797px;top:712px;font-size:12px;letter-spacing:-0.1px;color:#888">Main Model</div>
<svg class="a" style="left:936px;top:714px" width="10" height="6"><path d="M0.5 0.5L5 5L9.5 0.5" fill="none" stroke="#b0b0b0"/></svg>
<div class="a" style="left:1170px;top:705px;width:24px;height:23px;background:#e0e0e0"></div>
<div class="a" style="left:1196px;top:705px;width:25px;height:23px;background:#e0e0e0"></div>
<div class="a" style="left:1222px;top:705px;width:25px;height:23px;background:#e0e0e0"></div>
<div class="a" style="left:1248px;top:705px;width:25px;height:23px;background:#e0e0e0"></div>
<div class="a" style="left:1274px;top:705px;width:23px;height:23px;background:#e0e0e0"></div>
<svg class="a" style="left:1174px;top:710px" width="16" height="16"><path d="M1 4Q1 1 4 1H12Q15 1 15 4V6H10V9H12V12H10V15H6V9H1Z" fill="#a0a0a0"/></svg>
<svg class="a" style="left:1199px;top:709px" width="17" height="16"><path d="M1 13L9 3H13L16 2V15H1Z" fill="#a0a0a0"/></svg>
<svg class="a" style="left:1225px;top:709px" width="17" height="16"><path d="M3 1H11V6H14L16 10V15H12V12H6V15H3V7H1Z" fill="#a0a0a0"/></svg>
<svg class="a" style="left:1252px;top:709px" width="17" height="16"><path d="M1 5L9 1H13L16 3V15H1Z" fill="#a0a0a0"/><path d="M11 3L15 7M15 3L11 7" stroke="#e0e0e0" stroke-width="1.4"/></svg>
<svg class="a" style="left:1277px;top:709px" width="17" height="17"><path d="M2 3L6 7M6 3L2 7M4 2V8M1 5H7" stroke="#a8a8a8"/><path d="M9 6V16L11 13L13 16L14 15L12 12H15Z" fill="#fff" stroke="#888"/></svg>
<svg class="a" style="left:1301px;top:710px" width="16" height="15"><path d="M0.5 0.5H15.5V3L10 8V14L6 15V8L0.5 3Z" fill="#f4f4f4" stroke="#555" stroke-width="1.1"/><path d="M0.5 0.5H15.5V3H0.5Z" fill="#ccc" stroke="#555"/></svg>
<div class="t" style="left:1318px;top:712px;font-size:11px;color:#111">:0</div>


<!-- taskbar -->
<div class="a" style="left:0;top:728px;width:1366px;height:40px;background:#020408"></div>
<div class="a" style="left:76px;top:728px;width:344px;height:40px;background:#333333"></div>
<div class="t" style="left:88px;top:741px;font-size:14.5px;letter-spacing:0px;color:#a2a2a2">Buscar en la web y en Windows</div>
<svg class="a" style="left:16px;top:741px" width="14" height="14"><path d="M0 2L6 1.2V6.5H0ZM7 1L14 0V6.5H7ZM0 7.5H6V12.8L0 12ZM7 7.5H14V14L7 13Z" fill="#fff"/></svg>
<svg class="a" style="left:44px;top:740px" width="17" height="16"><path d="M0 2.3L7 1.4V7.5H0ZM8 1.2L17 0V7.5H8ZM0 8.5H7V14.6L0 13.7ZM8 8.5H17V16L8 14.8Z" fill="#fff"/></svg>
<svg class="a" style="left:433px;top:740px" width="22" height="16"><rect x="4.5" y="1.5" width="13" height="13" fill="none" stroke="#fff" stroke-width="1.3"/><path d="M2.5 3.5H0.7V12.5H2.5M19.5 3.5H21.3V12.5H19.5" fill="none" stroke="#fff" stroke-width="1.3"/></svg>
<svg class="a" style="left:484px;top:737px" width="21" height="22"><path fill-rule="evenodd" d="M20.5 12.5H6.5Q7 17 12.5 17Q16.5 17 19.5 15V20Q16.5 21.5 11.5 21.5Q1 21.5 1 12Q1 6 5 3Q3 7 4.5 9Q6 4 11.5 4Q20.5 4 20.5 11.5ZM6.5 9.5Q7 7 10.5 7Q14.5 7 14.5 9.5Z" fill="#1a7ee0"/><path d="M1 12Q1 1 11 1Q17 1 19 5Q15 1.5 9 2.5Q3 4 1 12Z" fill="#1a7ee0"/></svg>
<svg class="a" style="left:531px;top:736px" width="25" height="24"><circle cx="12.3" cy="12" r="12" fill="#1ed760"/><path d="M5.5 8.5Q13 6 19.5 9.5M6.5 12.5Q12.5 10.5 18 13.5M7.5 16Q12 14.5 16.5 16.8" fill="none" stroke="#111" stroke-width="2" stroke-linecap="round"/></svg>
<div class="a" style="left:523px;top:766px;width:40px;height:2px;background:#99c8ee"></div>
<svg class="a" style="left:580px;top:737px" width="23" height="21"><path d="M0.5 3H9L11 5H22V20H0.5Z" fill="#f4c84a"/><path d="M0.5 7H22V20H0.5Z" fill="#ffe08a"/><path d="M5 20V14H17V20H14V17H8V20Z" fill="#2a9ad8"/></svg>
<div class="a" style="left:572px;top:766px;width:40px;height:2px;background:#99c8ee"></div>
<svg class="a" style="left:630px;top:735px" width="21" height="25"><path d="M0.5 7H20.5L19 24H2Z" fill="#fff"/><path d="M6 7V5Q6 1 10.5 1Q15 1 15 5V7" fill="none" stroke="#fff" stroke-width="1.4"/><path d="M5 11H10V15H5ZM11 11H16V15H11ZM5 16H10V20H5ZM11 16H16V20H11Z" fill="#000"/></svg>
<svg class="a" style="left:674px;top:732px" width="32" height="30"><path d="M4 11.3L15.8 5.9L28.1 11.3V25H4Z" fill="#fff"/><path d="M5.3 12.3H27L18.4 16.4L22.7 21.5Z" fill="#000"/></svg>
<svg class="a" style="left:727px;top:737px" width="24" height="24"><circle cx="12" cy="12" r="11.5" fill="#db4437"/><path d="M12 12L2 17.7A11.5 11.5 0 0 0 12 23.5Z" fill="#0f9d58"/><path d="M12 12L22 6.3A11.5 11.5 0 0 1 12 23.5Z" fill="#ffcd40"/><path d="M12 12L2 17.7A11.5 11.5 0 0 1 2 6.3L7 12ZM7 12L12 23.5L17 12Z" fill="#0f9d58"/><path d="M12 7H22A11.5 11.5 0 0 1 14 23.3L17 12Z" fill="#ffcd40"/><circle cx="12" cy="12" r="5" fill="#fff"/><circle cx="12" cy="12" r="4" fill="#4285f4"/></svg>
<div class="a" style="left:719px;top:766px;width:40px;height:2px;background:#99c8ee"></div>
<div class="a" style="left:764px;top:728px;width:48px;height:40px;background:#333538"></div>
<div class="a" style="left:764px;top:766px;width:48px;height:2px;background:#99c8ee"></div>
<div class="a" style="left:776px;top:736px;width:24px;height:24px;background:linear-gradient(#f4f6fa,#c8d4ec 45%,#3a64c0)"></div>
<svg class="a" style="left:776px;top:736px" width="24" height="24"><path d="M7 4H14Q19 4 18 9Q17 12 14 12L18 20H13L10 13V20H6Z" fill="#2a4ea8"/><path d="M10 6H13Q15 6 15 8.5Q15 10.5 13 10.5H10Z" fill="#c8d4ec"/></svg>
<div class="a" style="left:825px;top:736px;width:24px;height:24px;background:linear-gradient(#fff0f0,#f08080 40%,#d02020)"></div>
<svg class="a" style="left:825px;top:736px" width="24" height="24"><path d="M12 3L20 20H16L12 11L8 20H4Z" fill="#b01818"/><path d="M6 16H18" stroke="#b01818" stroke-width="2"/></svg>
<div class="a" style="left:817px;top:766px;width:40px;height:2px;background:#99c8ee"></div>
<svg class="a" style="left:873px;top:736px" width="26" height="25"><path d="M2 14Q0 6 9 6Q20 5 21 12Q21 15 17 15Q13 15 14 19Q14 22 8 21Q3 20 2 14Z" fill="#e8f0f8" stroke="#9ab"/><circle cx="6" cy="13" r="1.8" fill="#e03030"/><circle cx="9" cy="9" r="1.8" fill="#30a030"/><circle cx="14" cy="8" r="1.8" fill="#f0c020"/><circle cx="9" cy="17" r="1.5" fill="#2050c0"/><path d="M13 22L23 3" stroke="#d8a040" stroke-width="2.5"/><path d="M22 1L25 0L24 4Z" fill="#e8b060"/></svg>
<div class="a" style="left:866px;top:766px;width:40px;height:2px;background:#99c8ee"></div>
<svg class="a" style="left:1220px;top:744px" width="13" height="8"><path d="M0.5 7L6.5 1L12.5 7" fill="none" stroke="#fff" stroke-width="1.2"/></svg>
<svg class="a" style="left:1243px;top:741px" width="15" height="15"><path d="M1 3L4 1L7 3L4 5ZM7 3L10 1L13 3L10 5ZM1 7L4 5L7 7L4 9ZM7 7L10 5L13 7L10 9ZM4 10L7 8L10 10L7 12Z" fill="#fff"/><circle cx="10.5" cy="11.5" r="3.5" fill="#3bb54a"/><path d="M8.8 11.5L10 12.7L12.3 10.3" fill="none" stroke="#fff" stroke-width="1"/></svg>
<svg class="a" style="left:1268px;top:742px" width="14" height="14"><path d="M1 13Q1 3 12 2M4 13Q4 6 12 5M7 13Q7 9 12 8" fill="none" stroke="#fff" stroke-width="1.2"/><rect x="9" y="10" width="4" height="4" fill="#fff"/></svg>
<svg class="a" style="left:1290px;top:740px" width="17" height="17"><path d="M0.7 0.7H16.3V12.3H10.5L8.5 14.5L6.5 12.3H0.7Z" fill="none" stroke="#fff" stroke-width="1.2"/><path d="M4 4H13M4 6.7H13M4 9.3H10" stroke="#fff" stroke-width="1"/></svg>
<div class="t" style="left:1321px;top:733px;font-size:12px;color:#fff">12:26 a. m.</div>
<div class="t" style="left:1321px;top:750px;font-size:12px;color:#fff">19/05/2016</div>


<!-- left strip -->
<div class="a" style="left:0px;top:0;width:7px;height:41px;background:linear-gradient(#c4c4c4,#9a9a9a 60%,#6e6e6e);border-left:1px solid #111;border-bottom:1px solid #111"></div>
<div class="a" style="left:0px;top:41px;width:7px;height:3px;background:#a8a8a8"></div>
<div class="a" style="left:0px;top:44px;width:7px;height:76px;background:linear-gradient(90deg,#c0c0c0 0,#c0c0c0 1px,#f2f2f2 1px)"></div>
<div class="a" style="left:2px;top:99px;width:5px;height:21px;background:#e6e6e6;border-left:1px solid #d0d0d0;border-top:1px solid #d0d0d0"></div>
<div class="a" style="left:0px;top:120px;width:7px;height:18px;background:#e8e8e8;border-top:1px solid #d4d4d4"></div>
<div class="a" style="left:0px;top:138px;width:7px;height:28px;background:linear-gradient(90deg,#c4c4c4,#e0e0e0)"></div>
<div class="a" style="left:0px;top:166px;width:7px;height:2px;background:#6a6a6a"></div>
<div class="a" style="left:0px;top:168px;width:7px;height:16px;background:#b6c5d5"></div>
<div class="t" style="left:4px;top:171px;font-size:12px;color:#111">P</div>
<div class="a" style="left:0px;top:184px;width:7px;height:3px;background:#f8f8f8"></div>
<div class="a" style="left:0px;top:187px;width:7px;height:499px;background:linear-gradient(90deg,#f0f0f0 0,#f0f0f0 1px,#6a6a6a 1px,#6a6a6a 3px,#f4f4f4 3px)"></div>
<div class="a" style="left:3px;top:187px;width:4px;height:2px;background:#6a6a6a"></div>
<div class="a" style="left:0px;top:686px;width:7px;height:17px;background:#e8e8e8"></div>
<div class="a" style="left:28px;top:0;width:7px;height:41px;background:linear-gradient(#c4c4c4,#9a9a9a 60%,#6e6e6e);border-left:1px solid #111;border-bottom:1px solid #111"></div>
<div class="a" style="left:28px;top:41px;width:7px;height:3px;background:#a8a8a8"></div>
<div class="a" style="left:28px;top:44px;width:7px;height:76px;background:linear-gradient(90deg,#c0c0c0 0,#c0c0c0 1px,#f2f2f2 1px)"></div>
<div class="a" style="left:30px;top:99px;width:5px;height:21px;background:#e6e6e6;border-left:1px solid #d0d0d0;border-top:1px solid #d0d0d0"></div>
<div class="a" style="left:28px;top:120px;width:7px;height:18px;background:#e8e8e8;border-top:1px solid #d4d4d4"></div>
<div class="a" style="left:28px;top:138px;width:7px;height:28px;background:linear-gradient(90deg,#c4c4c4,#e0e0e0)"></div>
<div class="a" style="left:28px;top:166px;width:7px;height:2px;background:#6a6a6a"></div>
<div class="a" style="left:28px;top:168px;width:7px;height:16px;background:#b6c5d5"></div>
<div class="t" style="left:32px;top:171px;font-size:12px;color:#111">P</div>
<div class="a" style="left:28px;top:184px;width:7px;height:3px;background:#f8f8f8"></div>
<div class="a" style="left:28px;top:187px;width:7px;height:499px;background:linear-gradient(90deg,#f0f0f0 0,#f0f0f0 1px,#6a6a6a 1px,#6a6a6a 3px,#f4f4f4 3px)"></div>
<div class="a" style="left:31px;top:187px;width:4px;height:2px;background:#6a6a6a"></div>
<div class="a" style="left:28px;top:686px;width:7px;height:17px;background:#e8e8e8"></div>
<div class="a" style="left:7px;top:0;width:21px;height:179px;background:#f0f0f0;border-left:1px solid #8cc0e6;border-bottom:1px solid #8cc0e6"></div>
<div class="a" style="left:8px;top:1px;width:20px;height:30px;background:#fff"></div>
<div class="a" style="left:7px;top:0;width:21px;height:1px;background:#8cc0e6"></div>
<div class="t" style="left:16px;top:10px;font-size:12px;color:#111">Re</div>
<div class="a" style="left:19px;top:42px;width:9px;height:23px;background:#000080"></div>
<div class="a" style="left:19px;top:139px;width:9px;height:11px;border:1px solid #e0e0e0;border-right:none"></div>
<div class="a" style="left:19px;top:156px;width:9px;height:13px;background:#fff;border:1px solid #333;border-right:none"></div>
<svg class="a" style="left:21px;top:159px" width="7" height="6"><path d="M0.5 2.5L3 5L7 1" fill="none" stroke="#333" stroke-width="1.1"/></svg>
<div class="a" style="left:7px;top:179px;width:21px;height:507px;background:linear-gradient(#d8d8d8,#f0f0f0 30px,#f0f0f0)"></div>
<div class="a" style="left:23px;top:179px;width:1px;height:507px;background:#e4e4e4"></div>
<div class="a" style="left:7px;top:179px;width:1px;height:507px;background:#b8b8b8"></div>
<div class="a" style="left:6px;top:535px;width:2px;height:10px;border:1px solid #888;border-right:none"></div>
<div class="a" style="left:6px;top:553px;width:2px;height:10px;border:1px solid #888;border-right:none"></div>
<div class="a" style="left:7px;top:686px;width:21px;height:17px;background:linear-gradient(90deg,#ececec 0,#ececec 12px,#cdcdcd 12px)"></div>
<svg class="a" style="left:9px;top:690px" width="7" height="9"><path d="M5.5 1L1.5 4.5L5.5 8" fill="none" stroke="#555" stroke-width="1.8"/></svg>
<div class="a" style="left:324px;top:0;width:22px;height:690px;background:linear-gradient(90deg,rgba(0,0,0,0.17),rgba(0,0,0,0.08) 6px,rgba(0,0,0,0.03) 13px,rgba(0,0,0,0))"></div>
<div class="a" style="left:35px;top:689px;width:290px;height:4px;background:linear-gradient(rgba(0,0,0,0.08),rgba(0,0,0,0))"></div>
<!-- ===== Rendering dialog ===== -->
<div class="a" style="left:35px;top:0;width:289px;height:689px;background:#f0f0f0;border:1px solid #7cbce6"></div>
<div class="a" style="left:36px;top:1px;width:287px;height:30px;background:#fff"></div>
<div class="t" style="left:44px;top:10px;font-size:12px;letter-spacing:-0.2px">Rendering</div>
<div class="t" style="left:252px;top:10px;font-size:13px">?</div>
<svg class="a" style="left:294px;top:9px" width="12" height="12"><path d="M1 1L11 11M11 1L1 11" stroke="#000" stroke-width="1.1"/></svg>
<!-- Render button -->
<div class="a" style="left:60px;top:48px;width:105px;height:22px;background:#e1e1e1;border:2px solid #0078d7"></div>
<div class="a" style="left:62px;top:50px;width:101px;height:1px;background:repeating-linear-gradient(90deg,#000 0,#000 1px,#fff 1px,#fff 2px)"></div>
<div class="a" style="left:62px;top:67px;width:101px;height:1px;background:repeating-linear-gradient(90deg,#000 0,#000 1px,#fff 1px,#fff 2px)"></div>
<div class="a" style="left:62px;top:50px;width:1px;height:18px;background:repeating-linear-gradient(180deg,#000 0,#000 1px,#fff 1px,#fff 2px)"></div>
<div class="a" style="left:162px;top:50px;width:1px;height:18px;background:repeating-linear-gradient(180deg,#000 0,#000 1px,#fff 1px,#fff 2px)"></div>
<div class="d c" style="left:60px;width:105px;top:54px"><u>R</u>ender</div>
<div class="a" style="left:171px;top:55px;width:13px;height:13px;background:#fff;border:1px solid #333"></div>
<div class="d" style="left:187px;top:57px">R<u>e</u>gion</div>
<!-- groups -->
<div class="g" style="top:84px;height:36px"></div><div class="d gl" style="top:79px">Engine</div>
<div class="g" style="top:132px;height:36px"></div><div class="d gl" style="top:127px">Quality</div>
<div class="g" style="top:178px;height:130px"></div><div class="d gl" style="top:173px">Output Settings</div>
<div class="g" style="top:319px;height:98px"></div><div class="d gl" style="top:314px">Lighting</div>
<div class="g" style="top:427px;height:102px"></div><div class="d gl" style="top:423px">Background</div>
<div class="g" style="top:539px;height:78px"></div><div class="d gl" style="top:535px">Image</div>
<div class="g" style="top:627px;height:45px"></div><div class="d gl" style="top:623px">Display</div>
<!-- engine -->
<div class="d r" style="right:1222px;top:96px"><u>O</u>ption:</div>
<div class="cb" style="top:91px;height:21px"></div><div class="d" style="left:156px;top:96px">NVIDIA mental ray</div>
<svg class="a chev" style="left:286px;top:99px" width="9" height="6"><path d="M0.5 0.5L4.5 4.5L8.5 0.5" fill="none" stroke="#333" stroke-width="1"/></svg>
<!-- quality -->
<div class="d r" style="right:1222px;top:145px"><u>S</u>etting:</div>
<div class="cb" style="top:140px;height:21px"></div><div class="d" style="left:156px;top:145px">Medium</div>
<svg class="a chev" style="left:286px;top:148px" width="9" height="6"><path d="M0.5 0.5L4.5 4.5L8.5 0.5" fill="none" stroke="#333" stroke-width="1"/></svg>
<!-- output -->
<div class="d r" style="right:1223px;top:194px">Resolution:</div>
<div class="a" style="left:146px;top:194px;width:13px;height:13px;border-radius:50%;background:#fff;border:1px solid #333"></div>
<div class="a" style="left:149px;top:197px;width:7px;height:7px;border-radius:50%;background:#333"></div>
<div class="d" style="left:162px;top:195px">S<u>c</u>reen</div>
<div class="a" style="left:146px;top:215px;width:13px;height:13px;border-radius:50%;background:#fff;border:1px solid #333"></div>
<div class="d" style="left:162px;top:216px"><u>P</u>rinter</div>
<div class="a" style="left:231px;top:212px;width:68px;height:20px;background:#fff;border:1px solid #cfcfcf"></div>
<div class="a" style="left:233px;top:214px;width:46px;height:16px;background:#ececec"></div>
<div class="d" style="left:237px;top:216px;color:#6d6d6d">96 DPI</div>
<svg class="a chev" style="left:286px;top:220px" width="9" height="6"><path d="M0.5 0.5L4.5 4.5L8.5 0.5" fill="none" stroke="#b5b5b5" stroke-width="1"/></svg>
<div class="d r" style="right:1223px;top:246px">Width:</div><div class="d" style="left:153px;top:246px">413 pixels</div>
<div class="d r" style="right:1223px;top:267px">Height:</div><div class="d" style="left:153px;top:267px">310 pixels</div>
<div class="d" style="left:93px;top:288px;letter-spacing:-0.2px">Uncompressed image size:&nbsp; 500.1 KB</div>
<!-- lighting -->
<div class="d r" style="right:1223px;top:335px">Sc<u>h</u>eme:</div>
<div class="cb" style="top:329px;height:20px"></div><div class="d" style="left:156px;top:334px">Exterior: Sun only</div>
<svg class="a chev" style="left:286px;top:337px" width="9" height="6"><path d="M0.5 0.5L4.5 4.5L8.5 0.5" fill="none" stroke="#333" stroke-width="1"/></svg>
<div class="d r" style="right:1223px;top:361px">S<u>u</u>n Setting:</div>
<div class="a" style="left:153px;top:359px;width:117px;height:20px;background:#fff;border:1px solid #7a7a7a"></div>
<div class="d" style="left:159px;top:364px">&lt;In-session, Lighting&gt;</div>
<div class="a btn" style="left:277px;top:360px;width:21px;height:18px"></div>
<div class="d c" style="left:277px;width:22px;top:364px;letter-spacing:1.5px;text-indent:1px">...</div>
<div class="a" style="left:61px;top:386px;width:237px;height:22px;background:#cccccc"></div>
<div class="d c" style="left:61px;width:237px;top:392px;color:#838383">Artificial <u>L</u>ights...</div>
<!-- background -->
<div class="d r" style="right:1224px;top:445px">St<u>y</u>le:</div>
<div class="cb" style="top:439px;height:21px"></div><div class="d" style="left:156px;top:444px">Sky: Few Clouds</div>
<svg class="a chev" style="left:286px;top:448px" width="9" height="6"><path d="M0.5 0.5L4.5 4.5L8.5 0.5" fill="none" stroke="#333" stroke-width="1"/></svg>
<div class="d" style="left:144px;top:480px">Clear</div>
<div class="d" style="left:246px;top:480px">Hazy</div>
<div class="d r" style="right:1224px;top:500px">Haze:</div>
<div class="a" style="left:153px;top:503px;width:119px;height:4px;background:#e7eaea;border:1px solid #d6d6d6"></div>
<div class="a" style="left:150px;top:498px;width:6px;height:13px;background:#0078d7"></div>
<!-- image -->
<div class="a btn" style="left:61px;top:552px;width:237px;height:22px"></div>
<div class="d c" style="left:61px;width:237px;top:558px"><u>A</u>djust Exposure...</div>
<div class="a btn" style="left:61px;top:583px;width:135px;height:22px"></div>
<div class="d c" style="left:61px;width:135px;top:589px">Sa<u>v</u>e to Project...</div>
<div class="a btn" style="left:201px;top:583px;width:97px;height:22px"></div>
<div class="d c" style="left:201px;width:97px;top:589px">E<u>x</u>port...</div>
<!-- display -->
<div class="a btn" style="left:61px;top:640px;width:237px;height:22px"></div>
<div class="d c" style="left:61px;width:237px;top:645px">Show the model</div>
</body></html>
